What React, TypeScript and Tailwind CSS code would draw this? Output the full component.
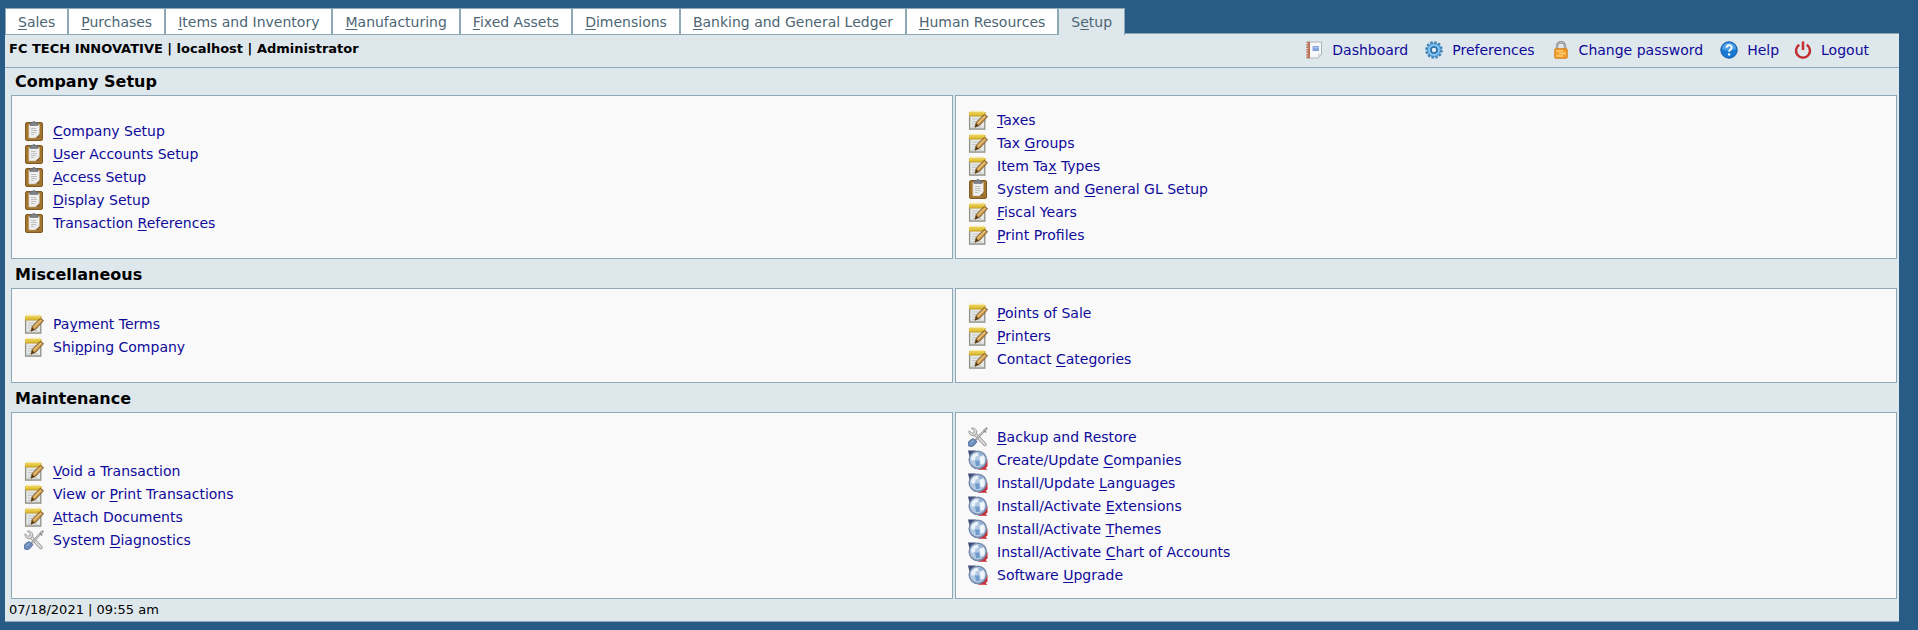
import type { ReactNode } from 'react';

const tabs = [
  '_Sales',
  '_Purchases',
  '_Items and Inventory',
  '_Manufacturing',
  '_Fixed Assets',
  '_Dimensions',
  '_Banking and General Ledger',
  '_Human Resources',
  'S_etup',
];

type IconName = 'clipboard' | 'note' | 'tools' | 'globe';
type Item = [IconName, string];

const sections: { title: string; left: Item[]; right: Item[] }[] = [
  {
    title: 'Company Setup',
    left: [
      ['clipboard', '_Company Setup'],
      ['clipboard', '_User Accounts Setup'],
      ['clipboard', '_Access Setup'],
      ['clipboard', '_Display Setup'],
      ['clipboard', 'Transaction _References'],
    ],
    right: [
      ['note', '_Taxes'],
      ['note', 'Tax _Groups'],
      ['note', 'Item Ta_x Types'],
      ['clipboard', 'System and _General GL Setup'],
      ['note', '_Fiscal Years'],
      ['note', '_Print Profiles'],
    ],
  },
  {
    title: 'Miscellaneous',
    left: [
      ['note', 'Pa_yment Terms'],
      ['note', 'Shi_pping Company'],
    ],
    right: [
      ['note', '_Points of Sale'],
      ['note', '_Printers'],
      ['note', 'Contact _Categories'],
    ],
  },
  {
    title: 'Maintenance',
    left: [
      ['note', '_Void a Transaction'],
      ['note', 'View or _Print Transactions'],
      ['note', '_Attach Documents'],
      ['tools', 'System _Diagnostics'],
    ],
    right: [
      ['tools', '_Backup and Restore'],
      ['globe', 'Create/Update _Companies'],
      ['globe', 'Install/Update _Languages'],
      ['globe', 'Install/Activate _Extensions'],
      ['globe', 'Install/Activate _Themes'],
      ['globe', 'Install/Activate _Chart of Accounts'],
      ['globe', 'Software _Upgrade'],
    ],
  },
];

function Hot({ text }: { text: string }) {
  const i = text.indexOf('_');
  if (i < 0) return <>{text}</>;
  return (
    <span>
      {text.slice(0, i)}
      <u className="underline underline-offset-2">{text[i + 1]}</u>
      {text.slice(i + 2)}
    </span>
  );
}

function Clipboard() {
  return (
    <svg viewBox="0 0 20 20" className="size-5 shrink-0" aria-hidden="true">
      <rect x="1.500" y="1.500" width="17" height="18" rx="1.500" fill="#a2752f" stroke="#805a22" />
      <path d="M4.800 3.500h10.700v13.500H4.800z" fill="#f0f0f0" stroke="#c4ad82" strokeWidth=".6" />
      <path d="M6 1.600h2.400C8.400.2 11.600.2 11.600 1.600H14v2.800H6z" fill="#7f8489" stroke="#5e6266" strokeWidth=".6" />
      <path d="M7 7.500h5M7 9.500h6M7 11.500h5M7 13.500h3" stroke="#bdbdbd" />
      <path d="M15.800 12.500v4.800h-4.500z" fill="#8d6526" />
      <path d="M15.600 12.500h-3.200l-1.200 4.500z" fill="#fff" stroke="#c2c2c2" strokeWidth=".5" />
    </svg>
  );
}

function Note() {
  return (
    <svg viewBox="0 0 20 20" className="size-5 shrink-0" aria-hidden="true">
      <path d="M1.600 3.500h15.200v15.500H1.600z" fill="#e6e9e8" stroke="#8f8f87" strokeWidth="1.300" />
      <path d="M2.200 18.300h14" stroke="#b0b0aa" />
      <path d="M1 2h16.500v4.200H1z" fill="#e0be36" />
      <path d="M1.500 6h15.500" stroke="#bd9b28" strokeWidth=".8" />
      <path d="M3 .8v3M5.500 .8v3M8 .8v3M10.500 .8v3M13 .8v3M15.500 .8v3" stroke="#f3dd72" strokeWidth="1.300" />
      <path d="M4 9h9M4 11.500h5M4 14h4M4 16.500h9" stroke="#c0c4c4" strokeWidth=".9" />
      <path d="M16.200 4.500l3.400 2.100-7.700 8.400-4.800 2.200 1.200-5z" fill="#c99848" stroke="#75501e" strokeWidth=".9" />
      <path d="M17.200 6L9.700 13.300" stroke="#ebc988" strokeWidth="1.100" />
      <path d="M8.200 13.200l2.200 2.200-3.500 2z" fill="#54391a" />
    </svg>
  );
}

function Tools() {
  return (
    <svg viewBox="0 0 20 20" className="size-5 shrink-0" aria-hidden="true">
      <path d="M7 7l10 10.500" stroke="#8c8c8c" strokeWidth="3.400" strokeLinecap="round" />
      <path d="M7 7l10 10.500" stroke="#dedede" strokeWidth="1.900" strokeLinecap="round" />
      <path
        d="M3.300 1.200l2.900 2.600-.3 2-2 .4L1 3.700C.4 6.800 3 9.400 6.200 8.500l2.500-2.400C9.400 3 6.400.2 3.300 1.200z"
        fill="#dcdcdc"
        stroke="#8c8c8c"
        strokeWidth=".8"
      />
      <path d="M18.500 1.500L8 12.500" stroke="#909090" strokeWidth="2.200" strokeLinecap="round" />
      <path d="M18 2L8 12.500" stroke="#e2e2e2" strokeWidth=".9" />
      <path d="M15.500 3l2.800 2.500" stroke="#909090" strokeWidth="1.500" />
      <path
        d="M5.200 11.500l3.800 3.200-2.800 3.500c-1.500 1.600-4.500 1.800-5.700.6-1-1.400-.3-3.700 1.200-5.200z"
        fill="#6e8fbe"
        stroke="#476593"
        strokeWidth=".8"
      />
      <path d="M5.600 13.300l-3.200 3" stroke="#a3bcdd" />
    </svg>
  );
}

function Globe() {
  return (
    <svg viewBox="0 0 20 20" className="size-5 shrink-0" aria-hidden="true">
      <path d="M0 .5h8L2 8.500z" fill="#3e4c77" />
      <path d="M19.500 9.500v7l-2 1.500 2 1.700H10l2-2.500 4-2z" fill="#c62a33" />
      <circle cx="9.800" cy="9.800" r="8.600" fill="#b3c9e2" stroke="#7589aa" strokeWidth="1.500" />
      <path d="M3 8.500C3.500 5 6.500 2.800 9.500 3l1 2.500-3 1.500-.5 3-3 .8z" fill="#e9f1f9" />
      <path d="M11.500 7l4-1.500c2 3 1.500 6.500-.5 8.800l-2.500-.6z" fill="#eef5fb" />
      <path d="M7 10.500h4.500v5.500H8z" fill="#6f9ccd" />
      <path d="M11 2.800c2 .2 3.300 1 4 2l-3 1z" fill="#89abd2" />
    </svg>
  );
}

const icons: Record<IconName, () => ReactNode> = {
  clipboard: Clipboard,
  note: Note,
  tools: Tools,
  globe: Globe,
};

function DashboardIcon() {
  return (
    <svg viewBox="0 0 18 18" className="size-[18px]" aria-hidden="true">
      <path d="M2 1h14.500v12.500L13 17H2z" fill="#f7f8fa" stroke="#adb3ba" />
      <path d="M1.500.8H5v16.400H1.500z" fill="#b8745a" />
      <path d="M1 2.500h2M1 5h2M1 7.500h2M1 10h2M1 12.500h2M1 15h2" stroke="#edd6cb" />
      <path d="M7.500 5h6.500v5H7.500z" fill="#82a3dc" />
      <path d="M7.500 6.800H14" stroke="#b9cdf0" />
      <path d="M16.500 13H13v4z" fill="#d5d9de" />
    </svg>
  );
}

function GearIcon() {
  return (
    <svg viewBox="0 0 18 18" className="size-[18px]" aria-hidden="true">
      <circle cx="9" cy="9" r="7.700" fill="none" stroke="#3d82b8" strokeWidth="2.200" strokeDasharray="2.500 1.530" />
      <circle cx="9" cy="9" r="6.800" fill="#67b0e4" stroke="#3d82b8" strokeWidth=".8" />
      <circle cx="9" cy="9" r="4.900" fill="none" stroke="#8fc8f0" strokeWidth="1.200" />
      <circle cx="9" cy="9" r="3" fill="#e4eef4" stroke="#2a6ca6" strokeWidth="1.600" />
    </svg>
  );
}

function LockIcon() {
  return (
    <svg viewBox="0 0 18 18" className="size-[18px]" aria-hidden="true">
      <path d="M5 9V5c0-5 8-5 8 0v4" fill="none" stroke="#858585" strokeWidth="2.400" />
      <path d="M5 9V5c0-5 8-5 8 0v4" fill="none" stroke="#cfcfcf" strokeWidth=".9" />
      <rect x="2.800" y="7.800" width="12.400" height="9.400" rx="1" fill="#f6a02e" stroke="#d67b12" />
      <path d="M4 10h7M7 12.500h7M4 15h7" stroke="#fdd07a" strokeWidth="1.300" />
    </svg>
  );
}

function HelpIcon() {
  return (
    <svg viewBox="0 0 18 18" className="size-[18px]" aria-hidden="true">
      <circle cx="9" cy="9" r="8.200" fill="#1878d2" stroke="#1459a6" />
      <path d="M2 8a7 6.500 0 0 1 14 0c-4 2-10 2-14 0z" fill="#4ba0e8" />
      <path d="M6.500 6.800c0-3.400 5.200-3.200 5.200-.3 0 2-2.600 2-2.600 4.200" fill="none" stroke="#fff" strokeWidth="1.900" />
      <circle cx="9.100" cy="13.400" r="1.200" fill="#fff" />
    </svg>
  );
}

function PowerIcon() {
  return (
    <svg viewBox="0 0 18 18" className="size-[18px]" aria-hidden="true">
      <path d="M5.300 3.700a7 7 0 1 0 7.400 0" fill="none" stroke="#c32f31" strokeWidth="2.500" />
      <path d="M9 .5v8.500" stroke="#c32f31" strokeWidth="2.500" />
    </svg>
  );
}

function MenuBox({ items }: { items: Item[] }) {
  return (
    <ul className="flex flex-1 flex-col justify-center border border-[#8fa8b5] bg-[#f9f9f9] py-3 pl-3">
      {items.map(([icon, label]) => {
        const Icon = icons[icon];
        return (
          <li key={label} className="flex h-[23px] items-center">
            <a href="#" className="flex items-center gap-[9px] leading-5 text-[#0f0a9b]">
              <Icon />
              <Hot text={label} />
            </a>
          </li>
        );
      })}
    </ul>
  );
}

function TopLink({ icon, children }: { icon: ReactNode; children: ReactNode }) {
  return (
    <a href="#" className="flex items-center gap-[9px] text-[#0f0a9b]">
      {icon}
      {children}
    </a>
  );
}

export default function App() {
  return (
    <div className="min-h-screen bg-[#285b85] pt-2 pr-[19px] pb-2 pl-[5px] font-['Verdana','DejaVu_Sans',sans-serif] text-sm text-black">
      <nav className="relative -mb-0.5 flex">
        {tabs.map((tab) => {
          const active = tab === 'S_etup';
          return (
            <a
              key={tab}
              href="#"
              aria-current={active ? 'page' : undefined}
              className={
                active
                  ? 'h-[27px] border-x border-t border-[#8fa8b5] bg-[#dee7ec] px-3 leading-[26px] text-[#4c6673]'
                  : 'h-[27px] border border-[#8fa8b5] bg-white px-3 leading-[26px] text-[#4c6673]'
              }
            >
              <Hot text={tab} />
            </a>
          );
        })}
      </nav>

      <div className="border-b border-[#8fa8b5] bg-[#dee7ec]">
        <header className="flex h-[35px] items-start justify-between border-y border-[#8fa8b5] pr-[30px] pl-1">
          <h1 className="pt-[5px] text-[13px] leading-5 font-bold">FC TECH INNOVATIVE | localhost | Administrator</h1>
          <div className="flex gap-[15px] pt-[6px] leading-5">
            <div className="flex gap-[17px]">
              <TopLink icon={<DashboardIcon />}>Dashboard</TopLink>
              <TopLink icon={<GearIcon />}>Preferences</TopLink>
              <TopLink icon={<LockIcon />}>Change password</TopLink>
              <TopLink icon={<HelpIcon />}>Help</TopLink>
            </div>
            <TopLink icon={<PowerIcon />}>Logout</TopLink>
          </div>
        </header>

        <main className="flex flex-col gap-0.5 pr-0.5 pl-1.5">
          {sections.map((s) => (
            <section key={s.title}>
              <h2 className="pl-1 text-base leading-[27px] font-bold">{s.title}</h2>
              <div className="flex gap-0.5">
                <MenuBox items={s.left} />
                <MenuBox items={s.right} />
              </div>
            </section>
          ))}
        </main>

        <footer className="pl-1 text-[13px] leading-[22px]">07/18/2021 | 09:55 am</footer>
      </div>
    </div>
  );
}
